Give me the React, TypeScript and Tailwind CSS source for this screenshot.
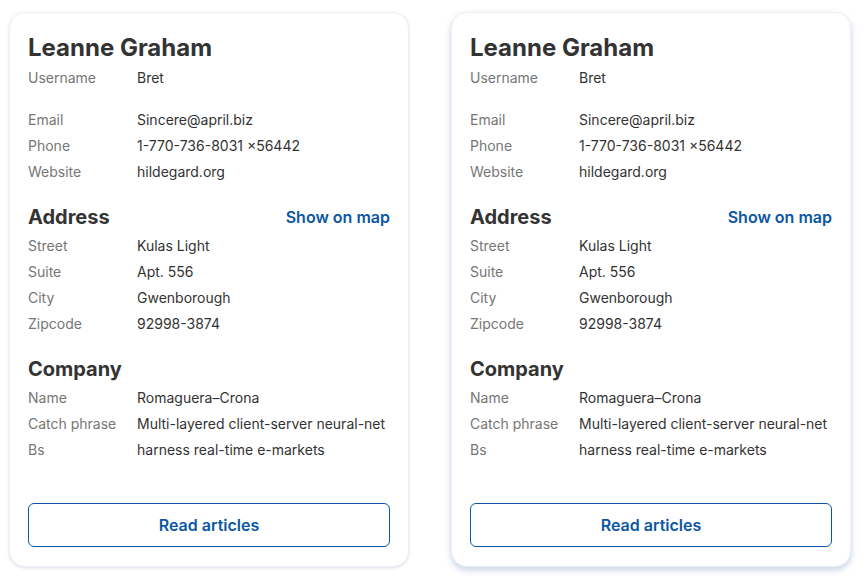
const user = {
  name: "Leanne Graham",
  username: "Bret",
  email: "Sincere@april.biz",
  phone: "1-770-736-8031 ×56442",
  website: "hildegard.org",
  address: { street: "Kulas Light", suite: "Apt. 556", city: "Gwenborough", zipcode: "92998-3874" },
  company: {
    name: "Romaguera–Crona",
    catchPhrase: "Multi-layered client-server neural-net",
    bs: "harness real-time e-markets",
  },
};

function Row({ label, value }: { label: string; value: string }) {
  return (
    <div className="flex h-[26px] items-center text-[14px]">
      <span className="w-[109px] shrink-0 text-[#767676]">{label}</span>
      <span className="text-[#333333]">{value}</span>
    </div>
  );
}

function UserCard({ hovered }: { hovered?: boolean }) {
  return (
    <div
      className={
        hovered
          ? "flex w-[400px] flex-col rounded-[16px] border border-[#eef0f4] bg-white px-[18px] pb-[19px] pt-[19px] shadow-[0_3px_6px_rgba(30,80,150,0.25)]"
          : "flex w-[400px] flex-col rounded-[16px] border border-[#eef0f4] bg-white px-[18px] pb-[19px] pt-[19px] shadow-[0_1px_3px_rgba(30,80,150,0.18)]"
      }
    >
      <h2 className="text-[24px] font-bold leading-[32px] text-[#333333]">{user.name}</h2>
      <Row label="Username" value={user.username} />
      <div className="mt-[16px]">
        <Row label="Email" value={user.email} />
        <Row label="Phone" value={user.phone} />
        <Row label="Website" value={user.website} />
      </div>

      <div className="mt-[19px] flex items-center justify-between">
        <h3 className="text-[20px] font-bold leading-[28px] text-[#333333]">Address</h3>
        <a href="#" className="text-[16px] font-semibold text-[#0b57a4]">
          Show on map
        </a>
      </div>
      <div className="mt-px">
        <Row label="Street" value={user.address.street} />
        <Row label="Suite" value={user.address.suite} />
        <Row label="City" value={user.address.city} />
        <Row label="Zipcode" value={user.address.zipcode} />
      </div>

      <h3 className="mt-[19px] text-[20px] font-bold leading-[28px] text-[#333333]">Company</h3>
      <div className="mt-px">
        <Row label="Name" value={user.company.name} />
        <Row label="Catch phrase" value={user.company.catchPhrase} />
        <Row label="Bs" value={user.company.bs} />
      </div>

      <button
        type="button"
        className="mt-[41px] h-[44px] w-full rounded-[6px] border border-[#0b57a4] bg-white text-[16px] font-semibold text-[#0b57a4]"
      >
        Read articles
      </button>
    </div>
  );
}

export default function App() {
  return (
    <div
      className="min-h-screen bg-white"
      style={{ fontFamily: "Inter, 'Noto Sans', sans-serif" }}
    >
      <div className="flex gap-[42px] pl-[9px] pt-[12px]">
        <UserCard />
        <UserCard hovered />
      </div>
    </div>
  );
}
